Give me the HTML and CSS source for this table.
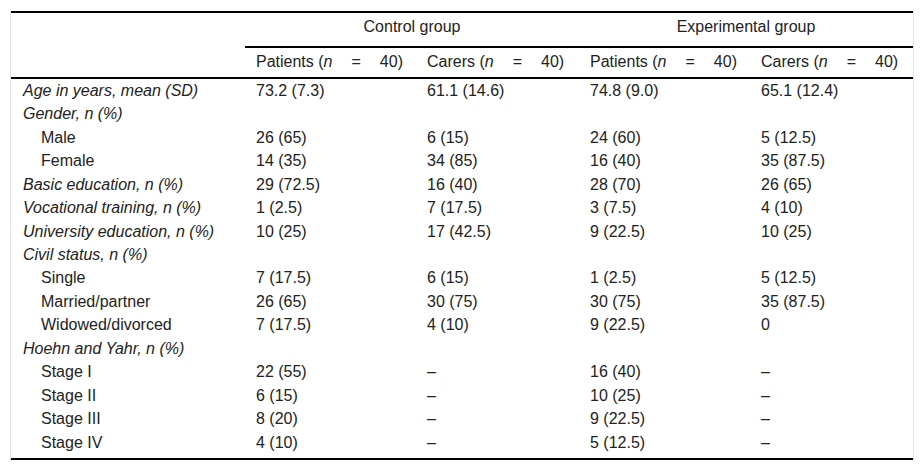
FILE: index.html
```html
<!DOCTYPE html>
<html>
<head>
<meta charset="utf-8">
<link rel="stylesheet" href="styles.css">
</head>
<body>
<div class="wrap">
<table class="tbl">
  <colgroup>
    <col class="c1"><col class="c2"><col class="c3"><col class="c2"><col class="c3">
  </colgroup>
  <thead>
    <tr class="h1">
      <th></th>
      <th colspan="2" class="grp">Control group</th>
      <th colspan="2" class="grp">Experimental group</th>
    </tr>
    <tr class="h2">
      <th></th>
      <th>Patients (<i>n</i><span class="eq">=</span>40)</th>
      <th>Carers (<i>n</i><span class="eq">=</span>40)</th>
      <th>Patients (<i>n</i><span class="eq">=</span>40)</th>
      <th>Carers (<i>n</i><span class="eq">=</span>40)</th>
    </tr>
  </thead>
  <tbody>
    <tr><td class="lbl">Age in years, mean (SD)</td><td>73.2 (7.3)</td><td>61.1 (14.6)</td><td>74.8 (9.0)</td><td>65.1 (12.4)</td></tr>
    <tr><td class="lbl">Gender, n (%)</td><td></td><td></td><td></td><td></td></tr>
    <tr><td class="sub">Male</td><td>26 (65)</td><td>6 (15)</td><td>24 (60)</td><td>5 (12.5)</td></tr>
    <tr><td class="sub">Female</td><td>14 (35)</td><td>34 (85)</td><td>16 (40)</td><td>35 (87.5)</td></tr>
    <tr><td class="lbl">Basic education, n (%)</td><td>29 (72.5)</td><td>16 (40)</td><td>28 (70)</td><td>26 (65)</td></tr>
    <tr><td class="lbl">Vocational training, n (%)</td><td>1 (2.5)</td><td>7 (17.5)</td><td>3 (7.5)</td><td>4 (10)</td></tr>
    <tr><td class="lbl">University education, n (%)</td><td>10 (25)</td><td>17 (42.5)</td><td>9 (22.5)</td><td>10 (25)</td></tr>
    <tr><td class="lbl">Civil status, n (%)</td><td></td><td></td><td></td><td></td></tr>
    <tr><td class="sub">Single</td><td>7 (17.5)</td><td>6 (15)</td><td>1 (2.5)</td><td>5 (12.5)</td></tr>
    <tr><td class="sub">Married/partner</td><td>26 (65)</td><td>30 (75)</td><td>30 (75)</td><td>35 (87.5)</td></tr>
    <tr><td class="sub">Widowed/divorced</td><td>7 (17.5)</td><td>4 (10)</td><td>9 (22.5)</td><td>0</td></tr>
    <tr><td class="lbl">Hoehn and Yahr, n (%)</td><td></td><td></td><td></td><td></td></tr>
    <tr><td class="sub">Stage I</td><td>22 (55)</td><td>–</td><td>16 (40)</td><td>–</td></tr>
    <tr><td class="sub">Stage II</td><td>6 (15)</td><td>–</td><td>10 (25)</td><td>–</td></tr>
    <tr><td class="sub">Stage III</td><td>8 (20)</td><td>–</td><td>9 (22.5)</td><td>–</td></tr>
    <tr class="last"><td class="sub">Stage IV</td><td>4 (10)</td><td>–</td><td>5 (12.5)</td><td>–</td></tr>
  </tbody>
</table>
</div>
</body>
</html>
```
FILE: styles.css
```css
html, body {
  margin: 0;
  padding: 0;
  background: #fff;
}
body {
  font-family: "Liberation Sans", Arial, sans-serif;
  font-size: 16px;
  color: #222;
}
.wrap {
  margin: 11px 0 0 10px;
  width: 902px;
  border-left: 1px solid #e4e4e4;
  border-right: 1px solid #e4e4e4;
}
.tbl {
  width: 100%;
  border-collapse: collapse;
  table-layout: fixed;
  line-height: 18px;
}
.c1 { width: 234px; }
.c2 { width: 171px; }
.c3 { width: 163px; }
.tbl th {
  font-weight: normal;
  text-align: left;
  padding: 0 0 0 11px;
  white-space: nowrap;
}
.tbl thead tr.h1 th {
  border-top: 2px solid #000;
  height: 27px;
  padding-bottom: 6px;
}
.tbl thead tr.h2 th {
  border-bottom: 2px solid #000;
  height: 27px;
  padding-bottom: 2px;
}
.tbl th.grp {
  text-align: center;
  border-bottom: 2px solid #000;
  padding-left: 0;
}
.eq {
  margin: 0 19px;
}
.tbl td {
  padding: 0 0 0 11px;
  height: 23.47px;
  white-space: nowrap;
}
.tbl td.lbl {
  font-style: italic;
  padding-left: 12px;
}
.tbl td.sub {
  padding-left: 30px;
}
.tbl tr.last td {
  border-bottom: 2px solid #000;
  padding-bottom: 3px;
}
```
